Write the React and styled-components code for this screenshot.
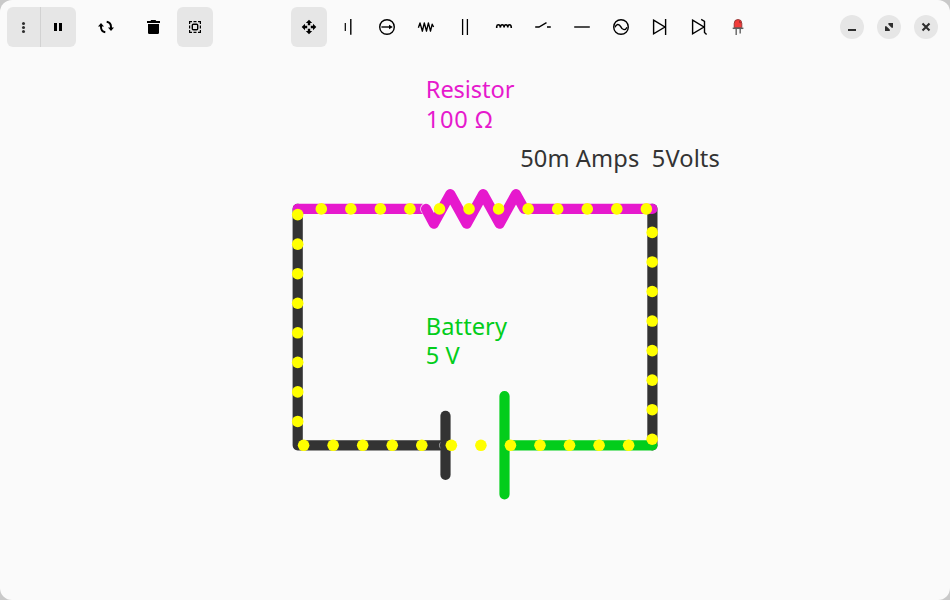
import React from "react";
import styled, { createGlobalStyle } from "styled-components";

const GlobalStyle = createGlobalStyle`
  html, body { margin: 0; padding: 0; background: #c9c9c9; overflow: hidden; }
`;

const Window = styled.main`
  display: flex;
  flex-direction: column;
  width: 950px;
  height: 600px;
  border-radius: 12px;
  overflow: hidden;
  background: #fafafa;
  font-family: "Noto Sans", "Open Sans", sans-serif;
`;

const HeaderBar = styled.header`
  flex: none;
  display: grid;
  grid-template-columns: 291px 1fr auto;
  align-items: center;
  height: 54px;
  box-sizing: border-box;
  padding-right: 12px;
`;

const Actions = styled.div`
  display: flex;
  align-items: center;
  padding-left: 7px;
`;

const LinkedGroup = styled.div`
  display: flex;
  border-radius: 6px;
  overflow: hidden;
  background: #e6e6e6;
  margin-right: 12px;
`;

const ToolButton = styled.button`
  display: flex;
  align-items: center;
  justify-content: center;
  width: ${(p) => p.$width || 36}px;
  height: 40px;
  box-sizing: border-box;
  padding: 0;
  border: 0;
  border-radius: ${(p) => (p.$linked ? 0 : 6)}px;
  border-right: ${(p) => (p.$divided ? "1px solid #d2d2d2" : "0")};
  margin-right: ${(p) => p.$gap || 0}px;
  background: ${(p) => (p.$active ? "#e6e6e6" : "transparent")};
  color: #000;
`;

const Palette = styled.nav`
  display: flex;
  gap: 3px;
`;

const WindowControls = styled.div`
  display: flex;
  gap: 13px;
`;

const ControlButton = styled.button`
  display: flex;
  align-items: center;
  justify-content: center;
  width: 24px;
  height: 24px;
  padding: 0;
  border: 0;
  border-radius: 50%;
  background: #e6e6e6;
  color: #2e2e2e;
`;

const Glyph = styled.svg`
  display: block;
  flex: none;
  width: 16px;
  height: 16px;
  overflow: visible;
`;

const Canvas = styled.svg`
  display: block;
  flex: none;
  width: 950px;
  height: 546px;
`;

const Conductor = styled.path`
  fill: none;
  stroke: ${(p) => p.$color};
  stroke-width: 10.2;
  stroke-linecap: round;
  stroke-linejoin: round;
`;

const Label = styled.text`
  fill: ${(p) => p.$color};
  font-size: 23.64px;
  white-space: pre;
`;

const Icon = ({ children }) => (
  <Glyph viewBox="0 0 16 16" fill="none" stroke="currentColor" strokeWidth="1.4">
    {children}
  </Glyph>
);

const MenuIcon = () => (
  <Icon>
    <g fill="#2e2e2e" stroke="none">
      <circle cx="7.5" cy="4.5" r="1.5" />
      <circle cx="7.5" cy="8.5" r="1.5" />
      <circle cx="7.5" cy="12.5" r="1.5" />
    </g>
  </Icon>
);

const PauseIcon = () => (
  <Icon>
    <path d="M3.5 4H6.5V12H3.5ZM8.5 4H11.5V12H8.5Z" fill="currentColor" stroke="none" transform="translate(-0.5 0)" />
  </Icon>
);

const RotateIcon = () => (
  <Icon>
    <path d="M7.3 13.3C4.8 12.9 3 11 3 8V6M8.7 2.7C11.2 3.1 13 5 13 8V10" strokeWidth="2" />
    <path d="M0 7.5L3 4L6 7.5ZM10 8.5H16L13 12Z" fill="currentColor" stroke="none" />
  </Icon>
);

const TrashIcon = () => (
  <Icon>
    <path
      d="M6.2 1H10.5L11.3 2H15V4H2V2H5.4ZM3 5H14V13.7Q14 15 12.7 15H4.3Q3 15 3 13.7Z"
      fill="currentColor"
      stroke="none"
    />
  </Icon>
);

const SelectIcon = () => (
  <Icon>
    <path d="M2.6 5V2.6H5M11 2.6H13.4V5M13.4 11V13.4H11M5 13.4H2.6V11" strokeWidth="1.2" />
    <path d="M6.5 2.6H9.5M13.4 6.5V9.5M9.5 13.4H6.5M2.6 9.5V6.5" strokeWidth="1.2" />
    <rect x="5.3" y="5.3" width="5.4" height="5.4" rx="1" strokeWidth="1.4" />
  </Icon>
);

const MoveIcon = () => (
  <Icon>
    <path
      d="M8 .7L11.2 4H9.2V6.2H6.8V4H4.8ZM8 15.3L11.2 12H9.2V9.8H6.8V12H4.8ZM.7 8L4 4.8V6.8H6.2V9.2H4V11.2ZM15.3 8L12 4.8V6.8H9.8V9.2H12V11.2Z"
      fill="currentColor"
      stroke="none"
    />
  </Icon>
);

const BatteryIcon = () => (
  <Icon>
    <path d="M5.3 4V12" strokeWidth="1.2" />
    <path d="M10.8 0V15.8" strokeWidth="1.4" />
  </Icon>
);

const CurrentIcon = () => (
  <Icon>
    <circle cx="8" cy="8" r="7.3" />
    <path d="M2.4 8H11" />
    <path d="M10 5.8L13.8 8L10 10.2Z" fill="currentColor" stroke="none" />
  </Icon>
);

const ResistorIcon = () => (
  <Icon>
    <path
      d="M.4 8.8L2 3.9L4.4 12.2L6.3 3.9L8.5 12.2L10.4 3.9L12.5 12.2L14.2 5.2L15.6 8"
      strokeWidth="1.35"
      strokeLinejoin="round"
    />
  </Icon>
);

const CapacitorIcon = () => (
  <Icon>
    <path d="M5.6 0V16M10.4 0V16" strokeWidth="1.3" />
  </Icon>
);

const InductorIcon = () => (
  <Icon>
    <path
      d="M.7 9V7.5Q.9 5.8 2.4 5.8Q4.3 5.8 4.4 8.6Q4.4 5.8 6.2 5.8Q8.1 5.8 8.1 8.6Q8.1 5.8 9.9 5.8Q11.8 5.8 11.8 8.6Q11.8 5.8 13.5 5.8Q15.3 5.8 15.3 9"
      strokeWidth="1.6"
    />
  </Icon>
);

const SwitchIcon = () => (
  <Icon>
    <path d="M.2 8H4L11.5 3.7M12 8H15.8" strokeWidth="1.4" />
  </Icon>
);

const WireIcon = () => (
  <Icon>
    <path d="M.2 8H15.8" strokeWidth="1.4" />
  </Icon>
);

const AcIcon = () => (
  <Icon>
    <circle cx="8" cy="8" r="7.3" />
    <path d="M2 8.4C3.2 4.8 6 4.4 7.7 7.6C9.5 11.4 12.5 11.7 14 8.2" />
  </Icon>
);

const DiodeIcon = () => (
  <Icon>
    <path d="M1.6 1.2L12.9 8L1.6 14.8ZM13.6 .1V15.9" strokeWidth="1.4" />
  </Icon>
);

const ZenerIcon = () => (
  <Icon>
    <path d="M1.6 1.2L12.9 8L1.6 14.8ZM10.2 .4L13.5 2.4V13.4L15.6 15.4" strokeWidth="1.4" />
  </Icon>
);

const LedIcon = () => (
  <Icon>
    <path d="M6.2 9.5V16M10.2 9.5V14.6" stroke="#6d6d6d" strokeWidth="1.5" />
    <path d="M4.2 8.6V4.4Q4.2 .5 8 .5Q11.8 .5 11.8 4.4V8.6Z" fill="#f23b39" stroke="#8f3332" strokeWidth=".9" />
    <path d="M9.3 2.5Q10.3 3 10.2 4.2" stroke="#5c2322" strokeWidth=".9" />
    <path d="M2.7 9.3H13.4" stroke="#5f5f5f" strokeWidth="1.5" />
  </Icon>
);

const MinimizeIcon = () => (
  <Icon>
    <path d="M4 11H12" strokeWidth="2" />
  </Icon>
);

const RestoreIcon = () => (
  <Icon>
    <path d="M7.4 4H12V8.8H10.6L7.4 5.4ZM4 7.2H5.4L8.8 10.6V12H4Z" fill="currentColor" stroke="none" />
  </Icon>
);

const CloseIcon = () => (
  <Icon>
    <path d="M4.5 4.5L11.5 11.5M11.5 4.5L4.5 11.5" strokeWidth="2.1" />
  </Icon>
);

const tools = [
  ["Move", MoveIcon],
  ["Battery", BatteryIcon],
  ["Current source", CurrentIcon],
  ["Resistor", ResistorIcon],
  ["Capacitor", CapacitorIcon],
  ["Inductor", InductorIcon],
  ["Switch", SwitchIcon],
  ["Wire", WireIcon],
  ["AC source", AcIcon],
  ["Diode", DiodeIcon],
  ["Zener diode", ZenerIcon],
  ["LED", LedIcon],
];

const UNIT = 29.55;
const run = (count, x, y, dx, dy) =>
  Array.from({ length: count }, (_, i) => [x + i * dx, y + i * dy]);

const charges = [
  ...run(12, 321.3, 208.9, UNIT, 0),
  ...run(8, 652.2, 232.4, 0, UNIT),
  ...run(12, 303.6, 445.3, UNIT, 0),
  ...run(8, 297.7, 214.6, 0, UNIT),
];

const DARK = "#333333";
const MAGENTA = "#e619cd";
const GREEN = "#03cd1b";

function Circuit() {
  return (
    <Canvas viewBox="0 54 950 546">
      <Conductor $color={DARK} d="M297.7 208.9V445.3H440" />
      <Conductor $color={DARK} d="M652.4 208.9V445.3" />
      <Conductor $color={MAGENTA} d="M297.7 208.9H422" />
      <circle cx="426" cy="208.9" r="5.8" fill="#fafafa" />
      <Conductor
        $color={MAGENTA}
        d="M426 208.9L433.8 223.7L450.2 194.1L466.7 223.7L483.1 194.1L499.6 223.7L516 194.1L524.2 208.9H652.4"
      />
      <path d="M442 441.2A4.6 4.6 0 0 0 442 449.4" fill="none" stroke="#aaa" strokeWidth="1" />
      <Conductor $color={DARK} d="M445.5 415.8V474.8" />
      <Conductor $color={GREEN} d="M504.5 396.1V494.3M504.5 445.3H652.4" />
      {charges.map(([cx, cy], i) => (
        <circle key={i} cx={cx} cy={cy} r="5.8" fill="#ffff00" />
      ))}
      <Label $color={MAGENTA} x="425.8" y="98.2" textLength="88.6">Resistor</Label>
      <Label $color={MAGENTA} x="425.8" y="127.8" textLength="66.4">100 Ω</Label>
      <Label $color={DARK} x="520.2" y="167.2" textLength="199.6">{"50m Amps  5Volts"}</Label>
      <Label $color={GREEN} x="425.8" y="335" textLength="81.2">Battery</Label>
      <Label $color={GREEN} x="425.8" y="364.2">5 V</Label>
    </Canvas>
  );
}

export default function App() {
  return (
    <>
      <GlobalStyle />
      <Window>
        <HeaderBar>
          <Actions>
            <LinkedGroup>
              <ToolButton $linked $divided $width={34} aria-label="Menu"><MenuIcon /></ToolButton>
              <ToolButton $linked $width={35} aria-label="Pause"><PauseIcon /></ToolButton>
            </LinkedGroup>
            <ToolButton $gap={11} aria-label="Rotate"><RotateIcon /></ToolButton>
            <ToolButton $gap={6} aria-label="Delete"><TrashIcon /></ToolButton>
            <ToolButton $active aria-label="Select"><SelectIcon /></ToolButton>
          </Actions>
          <Palette>
            {tools.map(([name, ToolIcon], i) => (
              <ToolButton key={name} $active={i === 0} aria-label={name}><ToolIcon /></ToolButton>
            ))}
          </Palette>
          <WindowControls>
            <ControlButton aria-label="Minimize"><MinimizeIcon /></ControlButton>
            <ControlButton aria-label="Restore"><RestoreIcon /></ControlButton>
            <ControlButton aria-label="Close"><CloseIcon /></ControlButton>
          </WindowControls>
        </HeaderBar>
        <Circuit />
      </Window>
    </>
  );
}
